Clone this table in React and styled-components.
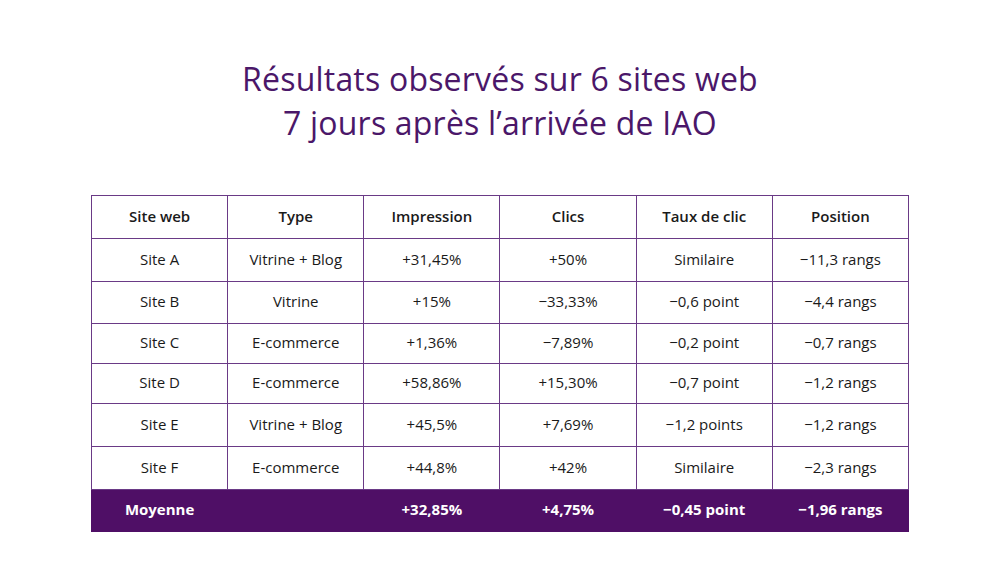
import React from "react";
import styled, { createGlobalStyle } from "styled-components";

const GlobalStyle = createGlobalStyle`
  html, body {
    margin: 0;
    padding: 0;
    background: #ffffff;
  }
  body {
    font-family: "Open Sans", "Noto Sans", sans-serif;
  }
`;

const Page = styled.div`
  width: 1000px;
  height: 584px;
  display: flex;
  flex-direction: column;
  align-items: center;
  background: #ffffff;
`;

const Title = styled.h1`
  margin: 57px 0 0;
  font-weight: 400;
  font-size: 32px;
  line-height: 44px;
  color: #4b1769;
  text-align: center;
  letter-spacing: 0.2px;
`;

const Table = styled.table`
  margin-top: 50px;
  width: 818px;
  border-collapse: collapse;
  table-layout: fixed;
  font-size: 15px;
  color: #1a1a1a;
`;

/* heights are content-box: row height = height + 3px bottom padding + 1px border */
const Th = styled.th`
  border: 1px solid #6a3a86;
  height: 39px;
  padding: 0 0 3px;
  font-weight: 600;
  text-align: center;
`;

const Td = styled.td`
  border: 1px solid #6a3a86;
  height: ${(p) => p.$h - 3}px;
  padding: 0 0 3px;
  text-align: center;
`;

const FootRow = styled.tr`
  background: #4f0f66;
  color: #ffffff;
  font-weight: 700;
`;

const FootCell = styled.td`
  height: 38px;
  padding: 0 0 3px;
  text-align: center;
  border: 1px solid #4f0f66;
`;

const headers = ["Site web", "Type", "Impression", "Clics", "Taux de clic", "Position"];

const rows = [
  { h: 42, cells: ["Site A", "Vitrine + Blog", "+31,45%", "+50%", "Similaire", "−11,3 rangs"] },
  { h: 41, cells: ["Site B", "Vitrine", "+15%", "−33,33%", "−0,6 point", "−4,4 rangs"] },
  { h: 39, cells: ["Site C", "E-commerce", "+1,36%", "−7,89%", "−0,2 point", "−0,7 rangs"] },
  { h: 39, cells: ["Site D", "E-commerce", "+58,86%", "+15,30%", "−0,7 point", "−1,2 rangs"] },
  { h: 42, cells: ["Site E", "Vitrine + Blog", "+45,5%", "+7,69%", "−1,2 points", "−1,2 rangs"] },
  { h: 42, cells: ["Site F", "E-commerce", "+44,8%", "+42%", "Similaire", "−2,3 rangs"] },
];

const footer = ["Moyenne", "", "+32,85%", "+4,75%", "−0,45 point", "−1,96 rangs"];

export default function App() {
  return (
    <Page>
      <GlobalStyle />
      <Title>
        Résultats observés sur 6 sites web
        <br />7 jours après l’arrivée de IAO
      </Title>
      <Table>
        <thead>
          <tr>
            {headers.map((h) => (
              <Th key={h}>{h}</Th>
            ))}
          </tr>
        </thead>
        <tbody>
          {rows.map((row) => (
            <tr key={row.cells[0]}>
              {row.cells.map((c, i) => (
                <Td key={i} $h={row.h}>
                  {c}
                </Td>
              ))}
            </tr>
          ))}
          <FootRow>
            {footer.map((c, i) => (
              <FootCell key={i}>{c}</FootCell>
            ))}
          </FootRow>
        </tbody>
      </Table>
    </Page>
  );
}
